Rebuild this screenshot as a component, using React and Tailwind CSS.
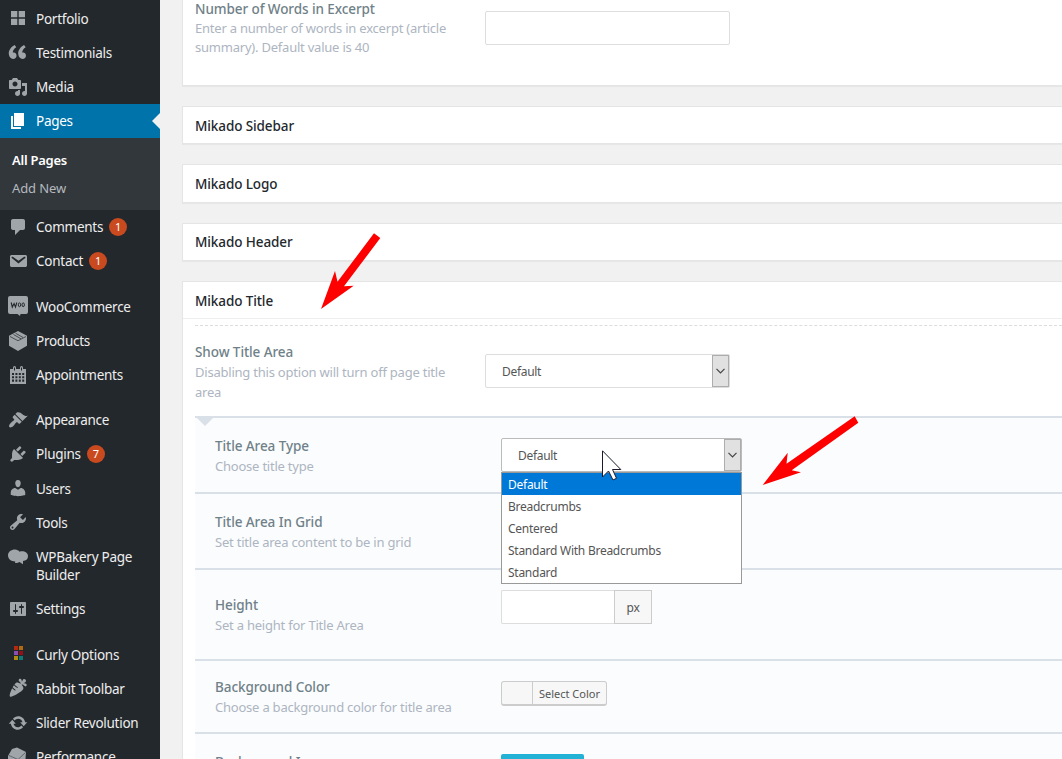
import clsx from 'clsx';

const ICONS = {
  portfolio: 'M3 3h6.3v6.3H3zM10.7 3H17v6.3h-6.3zM3 10.7h6.3V17H3zM10.7 10.7H17V17h-6.3z',
  quote: 'M8.54 12.74c0-.87-.24-1.61-.72-2.22-.73-.92-2.14-1.03-2.96-.85-.34-1.93 1.3-4.39 3.42-5.45L6.65 1.94C3.45 3.46.31 6.96.85 11.37 1.19 14.16 2.8 16 5.08 16c1 0 1.83-.29 2.48-.88.66-.59.98-1.38.98-2.38zm9.43 0c0-.87-.24-1.61-.72-2.22-.73-.92-2.14-1.04-2.96-.86-.34-1.93 1.3-4.39 3.42-5.45l-1.63-2.28c-3.2 1.52-6.34 5.02-5.8 9.43.34 2.79 1.95 4.64 4.23 4.64 1 0 1.83-.3 2.48-.88.66-.6.98-1.38.98-2.38z',
  media: 'M13 11V4c0-.55-.45-1-1-1h-1.67L9 1H5L3.67 3H2c-.55 0-1 .45-1 1v7c0 .55.45 1 1 1h10c.55 0 1-.45 1-1zM7 4.5c1.38 0 2.5 1.12 2.5 2.5S8.38 9.5 7 9.5 4.5 8.38 4.5 7 5.62 4.5 7 4.5zM14 6h5v10.5c0 1.38-1.12 2.5-2.5 2.5S14 17.88 14 16.5s1.12-2.5 2.5-2.5c.17 0 .34.02.5.05V9h-3V6zm-4 8.05V13h2v3.5c0 1.38-1.12 2.5-2.5 2.5S7 17.88 7 16.5 8.12 14 9.5 14c.17 0 .34.02.5.05z',
  page: 'M6 15V2h10v13H6zm-1 1h8v2H3V5h2v11z',
  comment: 'M5 2h10c1.1 0 2 .9 2 2v7c0 1.1-.9 2-2 2h-3l-5 5v-5H5c-1.1 0-2-.9-2-2V4c0-1.1.9-2 2-2z',
  email: 'M3.87 4h13.25C18.37 4 19 4.59 19 5.79v8.42c0 1.19-.63 1.79-1.88 1.79H3.87c-1.25 0-1.88-.6-1.88-1.79V5.79c0-1.2.63-1.79 1.88-1.79zm6.62 8.6l6.74-5.53c.24-.2.43-.66.13-1.07-.29-.41-.82-.42-1.17-.17l-5.7 3.86L4.8 5.83c-.35-.25-.88-.24-1.17.17-.3.41-.11.87.13 1.07z',
  calendar: 'M15 4h3v15H2V4h3V2.6a1.3 1.3 0 0 1 3 0V4h4V2.6a1.3 1.3 0 0 1 3 0zM6 2.6v3h1v-3zM13 2.6v3h1v-3zM4 8v2h2V8zm3.4 0v2h2V8zm3.4 0v2h2V8zm3.4 0v2h2V8zM4 11.2v2h2v-2zm3.4 0v2h2v-2zm3.4 0v2h2v-2zm3.4 0v2h2v-2zM4 14.4v2.4h2v-2.4zm3.4 0v2.4h2v-2.4zm3.4 0v2.4h2v-2.4zm3.4 0v2.4h2v-2.4z',
  appearance: 'M14.48 11.06L7.41 3.99l1.5-1.5c.5-.56 2.3-.47 3.51.32 1.21.8 1.43 1.28 2.91 2.1 1.18.64 2.45 1.26 4.45.85zm-.71.71L6.7 4.7 4.93 6.47c-.39.39-.39 1.02 0 1.41l1.06 1.06c.39.39.39 1.03 0 1.42-.6.6-1.43 1.11-2.21 1.69-.35.26-.7.53-1.01.84C1.43 14.23.4 16.08 1.4 17.07c.99 1 2.84-.03 4.18-1.36.31-.31.58-.66.85-1.02.57-.78 1.08-1.61 1.69-2.21.39-.39 1.02-.39 1.41 0l1.06 1.06c.39.39 1.02.39 1.41 0z',
  plugins: 'M13.11 4.36L9.87 7.6 8 5.73l3.24-3.24c.35-.34 1.05-.2 1.56.32.52.51.66 1.21.31 1.55zm-8 1.77l.91-1.12 9.01 9.01-1.19.84c-.71.71-2.63 1.16-3.82 1.16H6.14L4.9 17.26c-.59.59-1.54.59-2.12 0-.59-.58-.59-1.53 0-2.12l1.24-1.24v-3.88c0-1.13.4-3.19 1.09-3.89zm7.26 3.97l3.24-3.24c.34-.35 1.04-.21 1.55.31.52.51.66 1.21.31 1.55l-3.24 3.25z',
  users: 'M10 9.25c-2.27 0-2.73-3.44-2.73-3.44C7 4.02 7.82 2 9.97 2c2.16 0 2.98 2.02 2.71 3.81 0 0-.41 3.44-2.68 3.44zm0 2.57L12.72 10c2.39 0 4.52 2.33 4.52 4.53v2.49s-3.65 1.13-7.24 1.13c-3.65 0-7.24-1.13-7.24-1.13v-2.49c0-2.25 1.94-4.48 4.47-4.48z',
  tools: 'M16.68 9.77c-1.34 1.34-3.3 1.67-4.95.99l-5.41 6.52c-.99.99-2.59.99-3.58 0s-.99-2.59 0-3.57l6.52-5.42c-.68-1.65-.35-3.61.99-4.95 1.28-1.28 3.12-1.62 4.72-1.06l-2.89 2.89 2.82 2.82 2.86-2.87c.53 1.58.18 3.39-1.08 4.65zM3.81 16.21c.4.39 1.04.39 1.43 0 .4-.4.4-1.04 0-1.43-.39-.4-1.03-.4-1.43 0-.39.39-.39 1.03 0 1.43z',
  bakery: 'M7 2.5c2 0 3.6 1 4.6 2.2 3.8-1.2 8.4.6 8.4 4.6 0 3-2.2 4.6-5 4.7v3.3l-3.5-2.3c-1.6 1-2.9 1.2-4.5.9l.3-1.5C2.8 14.4 0 12 0 8.3 0 4.8 3.2 2.5 7 2.5z',
  settings: 'M18 16V4c0-.55-.45-1-1-1H3c-.55 0-1 .45-1 1v12c0 .55.45 1 1 1h14c.55 0 1-.45 1-1zM8 11h1c.55 0 1 .45 1 1s-.45 1-1 1H8v1.5c0 .28-.22.5-.5.5s-.5-.22-.5-.5V13H6c-.55 0-1-.45-1-1s.45-1 1-1h1V5.5c0-.28.22-.5.5-.5s.5.22.5.5V11zm5-2h-1c-.55 0-1-.45-1-1s.45-1 1-1h1V5.5c0-.28.22-.5.5-.5s.5.22.5.5V7h1c.55 0 1 .45 1 1s-.45 1-1 1h-1v5.5c0 .28-.22.5-.5.5s-.5-.22-.5-.5V9z',
  carrot: 'M2 18.43c1.51 1.36 11.64-4.64 13.14-7.21.72-1.22-.13-3.01-1.52-4.44C15.2 5.73 16.59 9 17.91 8.31c.6-.32.99-1.31.7-1.92-.52-1.08-2.25-1.08-3.42-1.21.83-.2 2.82-1.05 2.86-2.25.04-.92-1.13-1.97-2.05-1.86-1.21.14-1.65 1.88-2.06 3-.05-.71-.2-2.27-.98-2.95-1.04-.91-2.29-.05-2.32 1.05-.04 1.33 2.82 2.07 1.92 3.67C11.04 4.67 9.25 4.03 8.1 4.7c-.49.31-1.05.91-1.63 1.69.89.94 2.12 2.07 3.09 2.72.2.14.26.42.11.62-.14.21-.42.26-.62.12-.99-.67-2.2-1.78-3.1-2.71-.45.67-.91 1.43-1.34 2.23.85.86 1.93 1.83 2.79 2.41.2.14.25.42.11.62-.14.21-.42.26-.63.12-.85-.58-1.86-1.48-2.71-2.32C2.4 13.69 1.1 17.63 2 18.43z',
  update: 'M10.2 3.28c3.53 0 6.43 2.61 6.92 6h2.08l-3.5 4-3.5-4h2.32c-.45-1.97-2.21-3.45-4.32-3.45-1.45 0-2.73.71-3.54 1.78L4.95 5.66C6.23 4.2 8.11 3.28 10.2 3.28zm-.4 13.44c-3.52 0-6.43-2.61-6.92-6H.8l3.5-4c1.17 1.33 2.33 2.67 3.5 4H5.48c.45 1.97 2.21 3.45 4.32 3.45 1.45 0 2.73-.71 3.54-1.78l1.71 1.95c-1.28 1.46-3.15 2.38-5.25 2.38z',
};

const topMenu = [
  { icon: 'portfolio', label: 'Portfolio' },
  { icon: 'quote', label: 'Testimonials' },
  { icon: 'media', label: 'Media' },
];

const menuGroups = [
  [
    { icon: 'comment', label: 'Comments', count: 1 },
    { icon: 'email', label: 'Contact', count: 1 },
  ],
  [
    { icon: 'woo', label: 'WooCommerce' },
    { icon: 'box', label: 'Products' },
    { icon: 'calendar', label: 'Appointments' },
  ],
  [
    { icon: 'appearance', label: 'Appearance' },
    { icon: 'plugins', label: 'Plugins', count: 7 },
    { icon: 'users', label: 'Users' },
    { icon: 'tools', label: 'Tools' },
    { icon: 'bakery', label: 'WPBakery Page Builder' },
    { icon: 'settings', label: 'Settings' },
  ],
  [
    { icon: 'curly', label: 'Curly Options' },
    { icon: 'carrot', label: 'Rabbit Toolbar' },
    { icon: 'update', label: 'Slider Revolution' },
    { icon: 'cube', label: 'Performance' },
  ],
];

const titleTypes = ['Default', 'Breadcrumbs', 'Centered', 'Standard With Breadcrumbs', 'Standard'];

function MenuIcon({ name }) {
  if (name === 'woo') {
    return (
      <svg viewBox="0 0 20 20" className="size-5 fill-[#a0a5aa]">
        <path d="M2 0h16a2 2 0 0 1 2 2v14a2 2 0 0 1-2 2h-5.500l-.5 2-2.500-2H2a2 2 0 0 1-2-2V2a2 2 0 0 1 2-2z" />
        <path
          d="M3.200 6.500l1.100 4.600 1.800-3.600 1.400 3.600 1.300-4.600"
          className="fill-none stroke-[#23282d]"
          strokeWidth="1.100"
        />
        <ellipse cx="11.500" cy="8.800" rx="1.200" ry="1.900" className="fill-none stroke-[#23282d]" strokeWidth="1" />
        <ellipse cx="15.200" cy="8.800" rx="1.200" ry="1.900" className="fill-none stroke-[#23282d]" strokeWidth="1" />
      </svg>
    );
  }
  if (name === 'box') {
    return (
      <svg viewBox="0 0 20 20" className="size-5 fill-[#a0a5aa]">
        <path d="M10 0l9 4.800v10L10 20l-9-5.200v-10z" />
        <path
          d="M2 5.500l8 4.200 8-4.200M5.500 3.500l7.500 4.300M7.500 2.200l7.500 4.300"
          className="fill-none stroke-[#23282d]"
          strokeWidth="0.700"
        />
      </svg>
    );
  }
  if (name === 'curly') {
    return (
      <svg viewBox="0 0 20 20" className="size-5">
        <path d="M6 2h4v4H6z" fill="#b3290f" />
        <path d="M11 2h4v4h-4z" fill="#b3690f" />
        <path d="M6 7h4v4H6z" fill="#8a4fb5" />
        <path d="M11 7h4v4h-4z" fill="#960f14" />
        <path d="M6 12h4v4H6z" fill="#b38a0f" />
        <path d="M11 12h4v4h-4z" fill="#0f7a75" />
      </svg>
    );
  }
  if (name === 'cube') {
    return (
      <svg viewBox="0 0 20 20" className="size-5 fill-[#a0a5aa]">
        <path d="M4 2l5-1.500 9 4.500-1 13-8 2L0 14V9z" />
        <path d="M1 8.500l9 4 7.500-7M10 12.500V19" className="fill-none stroke-[#5c6166]" strokeWidth="0.900" />
        <path d="M3 12l1 3 2-2M6.500 13.500l1 3" className="fill-none stroke-[#23282d]" strokeWidth="1" />
      </svg>
    );
  }
  return (
    <svg viewBox="0 0 20 20" className="size-5 fill-current" fillRule="evenodd">
      <path d={ICONS[name]} />
    </svg>
  );
}

function MenuItem({ item, active }) {
  return (
    <li
      className={clsx(
        'relative flex text-[13.500px] leading-[18.2px]',
        active ? 'bg-[#0073aa] text-white' : 'text-[#eee]'
      )}
    >
      <span className={clsx('w-9 shrink-0 pl-2 pt-[7px]', active ? 'text-white' : 'text-[#a0a5aa]')}>
        <MenuIcon name={item.icon} />
      </span>
      <span className="flex pb-[7.700px] pr-2 pt-[8.300px] tracking-[-0.260px]">
        {item.label}
        {item.count && (
          <span className="-mb-px ml-1.5 flex size-[18px] items-center justify-center rounded-full bg-[#ca4a1f] text-[11px] tracking-normal text-white">
            {item.count}
          </span>
        )}
      </span>
      {active && (
        <span className="absolute right-0 top-[9px] border-8 border-transparent border-r-[#f1f1f1]" />
      )}
    </li>
  );
}

function Sidebar() {
  return (
    <aside className="h-full w-40 shrink-0 overflow-hidden bg-[#23282d] pt-[1.4px]">
      <ul>
        {topMenu.map((item) => (
          <MenuItem key={item.label} item={item} />
        ))}
        <MenuItem item={{ icon: 'page', label: 'Pages' }} active />
      </ul>
      <ul className="h-[71.800px] bg-[#32373c] px-3 pt-[8px] text-[13px] leading-7">
        <li className="font-semibold tracking-[-0.260px] text-white">All Pages</li>
        <li className="tracking-[-0.1px] text-[#b4b9be]">Add New</li>
      </ul>
      {menuGroups.map((group, i) => (
        <ul key={i} className={clsx(i > 0 && 'mt-[11px]')}>
          {group.map((item) => (
            <MenuItem key={item.label} item={item} />
          ))}
        </ul>
      ))}
    </aside>
  );
}

function Panel({ title, children }) {
  return (
    <section className="mb-5 border border-r-0 border-[#e5e5e5] bg-white shadow-[0_1px_1px_rgba(0,0,0,0.04)]">
      <h2 className="flex h-[36.400px] items-center pl-3 pt-px text-[13.500px] font-medium tracking-[-0.1px] text-[#23282d]">
        {title}
      </h2>
      {children}
    </section>
  );
}

function Label({ title, text, className, textClass = 'leading-5' }) {
  return (
    <div className={clsx('shrink-0', className)}>
      <h3 className="text-[13.500px] font-medium leading-5 tracking-[-0.080px] text-[#6f8188]">{title}</h3>
      <p className={clsx('text-[13px] tracking-[-0.220px] text-[#adb5c1]', textClass)}>{text}</p>
    </div>
  );
}

function SelectBox({ value, className }) {
  return (
    <div className={clsx('flex h-[34px] rounded-[2px] border bg-white', className)}>
      <span className="flex-1 pl-4 text-[12px] leading-[34px] tracking-[-0.300px] text-[#555]">{value}</span>
      <span className="flex w-[17px] items-center justify-center border border-[#adadad] bg-[#e1e1e1]">
        <svg viewBox="0 0 9 6" className="h-1.5 w-[9px] fill-none stroke-[#444]">
          <path d="M.5.8l4 4 4-4" strokeWidth="1.200" />
        </svg>
      </span>
    </div>
  );
}

function Row({ title, text, className, labelClass, children }) {
  return (
    <div className={clsx('flex border-t-2 border-[#d9e0e7] bg-[#fbfcfe] pl-5', className)}>
      <Label title={title} text={text} className={clsx('w-[286px]', labelClass)} />
      {children}
    </div>
  );
}

function Content() {
  return (
    <main className="min-w-0 flex-1 pl-[22px]">
      <section className="mb-5 flex h-[86px] border-b border-l border-[#e5e5e5] bg-white pl-3 shadow-[0_1px_1px_rgba(0,0,0,0.04)]">
        <Label
          title="Number of Words in Excerpt"
          text="Enter a number of words in excerpt (article summary). Default value is 40"
          className="-mt-px w-[290px] pr-7"
          textClass="leading-[19px]"
        />
        <div className="mt-[11px] h-[34px] w-[245px] rounded-[2px] border border-[#ddd] bg-white" />
      </section>

      <Panel title="Mikado Sidebar" />
      <Panel title="Mikado Logo" />
      <Panel title="Mikado Header" />

      <Panel title="Mikado Title">
        <div className="-mt-px border-t border-[#eee] pl-3 pt-[6px]">
          <div className="flex h-[91px] border-t border-dashed border-[#ddd]">
            <Label
              title="Show Title Area"
              text="Disabling this option will turn off page title area"
              className="w-[290px] pr-7 pt-4"
            />
            <SelectBox value="Default" className="mt-[28px] w-[245px] border-[#ddd]" />
          </div>

          <div className="relative">
            <span className="absolute left-0.5 top-0.5 border-8 border-b-0 border-transparent border-t-[#d9e0e7]" />
            <Row title="Title Area Type" text="Choose title type" className="h-[76px]" labelClass="pt-[18px]">
              <div className="relative mt-5 w-[241px]">
                <SelectBox value="Default" className="border-[#bbb]" />
                <ul className="absolute inset-x-0 top-[34px] z-10 border border-[#999] bg-white text-[12px] leading-6 tracking-[-0.260px] text-[#555]">
                  {titleTypes.map((type, i) => (
                    <li key={type} className={clsx('h-[22px] pl-1.5', i === 0 && 'bg-[#0078d7] text-white')}>
                      {type}
                    </li>
                  ))}
                </ul>
                <svg viewBox="0 0 20 31" className="absolute left-[101px] top-3 z-20 h-[31px] w-5">
                  <path
                    d="M.5.8v26.200l6-6 4.500 9 3.500-1.700-4-8.800h8.300z"
                    fill="#fff"
                    stroke="#1a1a2e"
                    strokeWidth="1"
                  />
                </svg>
              </div>
            </Row>
            <Row
              title="Title Area In Grid"
              text="Set title area content to be in grid"
              className="h-[76px]"
              labelClass="pt-[18px]"
            />
            <Row title="Height" text="Set a height for Title Area" className="h-[91px]" labelClass="pt-[25.800px]">
              <div className="mt-5 flex h-[34px] w-[151px]">
                <span className="flex-1 rounded-l-[2px] border border-r-0 border-[#ddd] bg-white" />
                <span className="flex w-[38px] items-center justify-center border border-[#ccc] bg-[#f7f7f7] pt-0.5 text-[12px] tracking-[-0.3px] text-[#555]">
                  px
                </span>
              </div>
            </Row>
            <Row
              title="Background Color"
              text="Choose a background color for title area"
              className="h-[73px]"
              labelClass="pt-4"
            >
              <button className="mt-5 flex h-[25px] w-[106px] rounded-[3px] border border-b-2 border-[#ccc] bg-[#f7f7f7] text-[11px] text-[#555]">
                <span className="h-full w-[31px] border-r border-[#ccc]" />
                <span className="flex-1 leading-[23px]">Select Color</span>
              </button>
            </Row>
            <Row title="Background Image" text="Choose an Image for Title Area" className="h-[90px]" labelClass="pt-[18px]">
              <button className="mt-5 h-8 w-[83px] rounded-[2px] bg-[#21b2d6]" />
            </Row>
          </div>
        </div>
      </Panel>
    </main>
  );
}

export default function App() {
  return (
    <div className="relative flex h-[759px] w-[1062px] overflow-hidden bg-[#f1f1f1] font-['Noto_Sans','Open_Sans',sans-serif]">
      <Sidebar />
      <Content />

      {/* Red pointer arrows */}
      <svg viewBox="0 0 60 78" className="absolute left-[321px] top-[232px] h-[78px] w-[60px] fill-[#fe0000]">
        <path d="M0 77L14 39l2.500 10.700L53 1.300 59.300 6 23 54.300l9.700-.6z" />
      </svg>
      <svg viewBox="0 0 97 71" className="absolute left-[762px] top-[415px] h-[71px] w-[97px] fill-[#fe0000]">
        <path d="M.7 70L25.700 37.700l-1.200 11L92.700 1.300 96.300 7.700 29.700 55.300l9.300 2z" />
      </svg>
    </div>
  );
}
